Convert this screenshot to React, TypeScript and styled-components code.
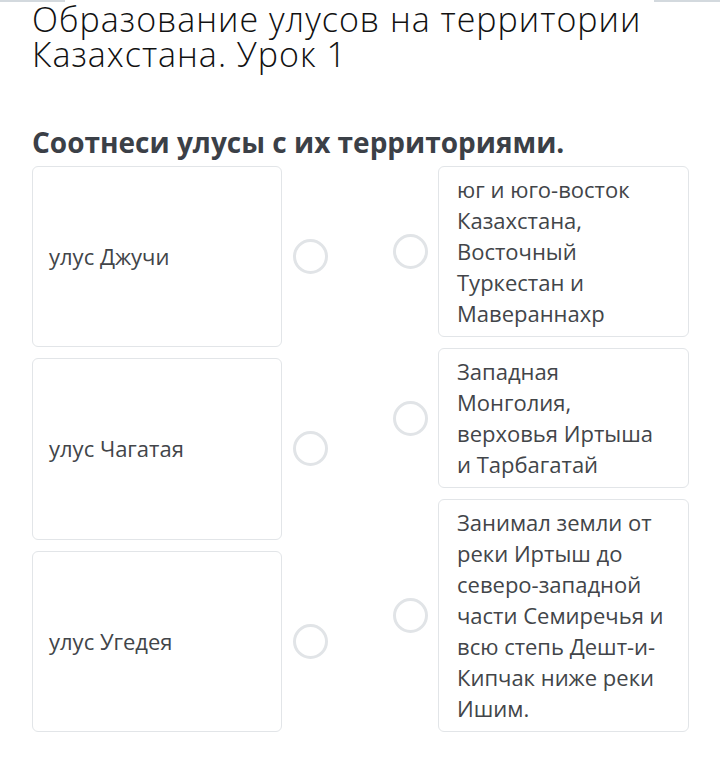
import React from 'react';
import styled, { createGlobalStyle } from 'styled-components';

const GlobalStyle = createGlobalStyle`
  html, body {
    margin: 0;
    padding: 0;
    background: #ffffff;
  }
  body {
    font-family: 'Open Sans', 'Noto Sans', 'DejaVu Sans', sans-serif;
  }
`;

const Page = styled.div`
  width: 720px;
  min-height: 778px;
  background: #ffffff;
`;

// обрезанные кнопки из предыдущего блока
const TopStrip = styled.div`
  display: flex;
  justify-content: space-between;
  height: 2px;
`;

const TopBar = styled.div<{ $width: number }>`
  width: ${(p) => p.$width}px;
  height: 2px;
  background: #d3d9de;
`;

const Content = styled.div`
  padding: 0 31px 0 32px;
`;

const Title = styled.h1`
  margin: 0;
  font-size: 34px;
  line-height: 35px;
  font-weight: 300;
  letter-spacing: 1px;
  color: #111111;
`;

const Question = styled.h2`
  margin: 53px 0 7px;
  font-size: 28px;
  line-height: 34px;
  font-weight: 700;
  color: #3b4047;
`;

const Match = styled.div`
  display: flex;
  align-items: stretch;
`;

const LeftColumn = styled.div`
  display: flex;
  flex-direction: column;
  gap: 11px;
`;

const RightColumn = styled.div`
  display: flex;
  flex-direction: column;
  gap: 11px;
  margin-left: 65px;
`;

const LeftRow = styled.div`
  flex: 1 1 0;
  display: flex;
  align-items: center;
  gap: 11px;
`;

const RightRow = styled.div`
  display: flex;
  align-items: center;
  gap: 10px;
`;

const Card = styled.div<{ $side: 'left' | 'right' }>`
  box-sizing: border-box;
  width: ${(p) => (p.$side === 'left' ? 250 : 251)}px;
  align-self: stretch;
  display: flex;
  align-items: center;
  padding: ${(p) => (p.$side === 'left' ? '7px 16px' : '7px 18px')};
  border: 1px solid #e2e5e8;
  border-radius: 6px;
  background: #ffffff;
  font-size: 22px;
  line-height: 31px;
  color: #424549;
`;

const Radio = styled.div`
  box-sizing: border-box;
  flex: 0 0 auto;
  width: 35px;
  height: 35px;
  border: 3px solid #e1e4e7;
  border-radius: 50%;
  background: #ffffff;
`;

const ulusy = ['улус Джучи', 'улус Чагатая', 'улус Угедея'];

const territories = [
  'юг и юго-восток Казахстана, Восточный Туркестан и Мавераннахр',
  'Западная Монголия, верховья Иртыша и Тарбагатай',
  'Занимал земли от реки Иртыш до северо-западной части Семиречья и всю степь Дешт-и-Кипчак ниже реки Ишим.',
];

export default function App() {
  return (
    <Page>
      <GlobalStyle />
      <TopStrip>
        <TopBar $width={65} />
        <TopBar $width={66} />
      </TopStrip>
      <Content>
        <Title>
          Образование улусов на территории
          <br />
          Казахстана. Урок 1
        </Title>
        <Question>Соотнеси улусы с их территориями.</Question>
        <Match>
          <LeftColumn>
            {ulusy.map((u) => (
              <LeftRow key={u}>
                <Card $side="left">{u}</Card>
                <Radio />
              </LeftRow>
            ))}
          </LeftColumn>
          <RightColumn>
            {territories.map((t) => (
              <RightRow key={t}>
                <Radio />
                <Card $side="right">{t}</Card>
              </RightRow>
            ))}
          </RightColumn>
        </Match>
      </Content>
    </Page>
  );
}
